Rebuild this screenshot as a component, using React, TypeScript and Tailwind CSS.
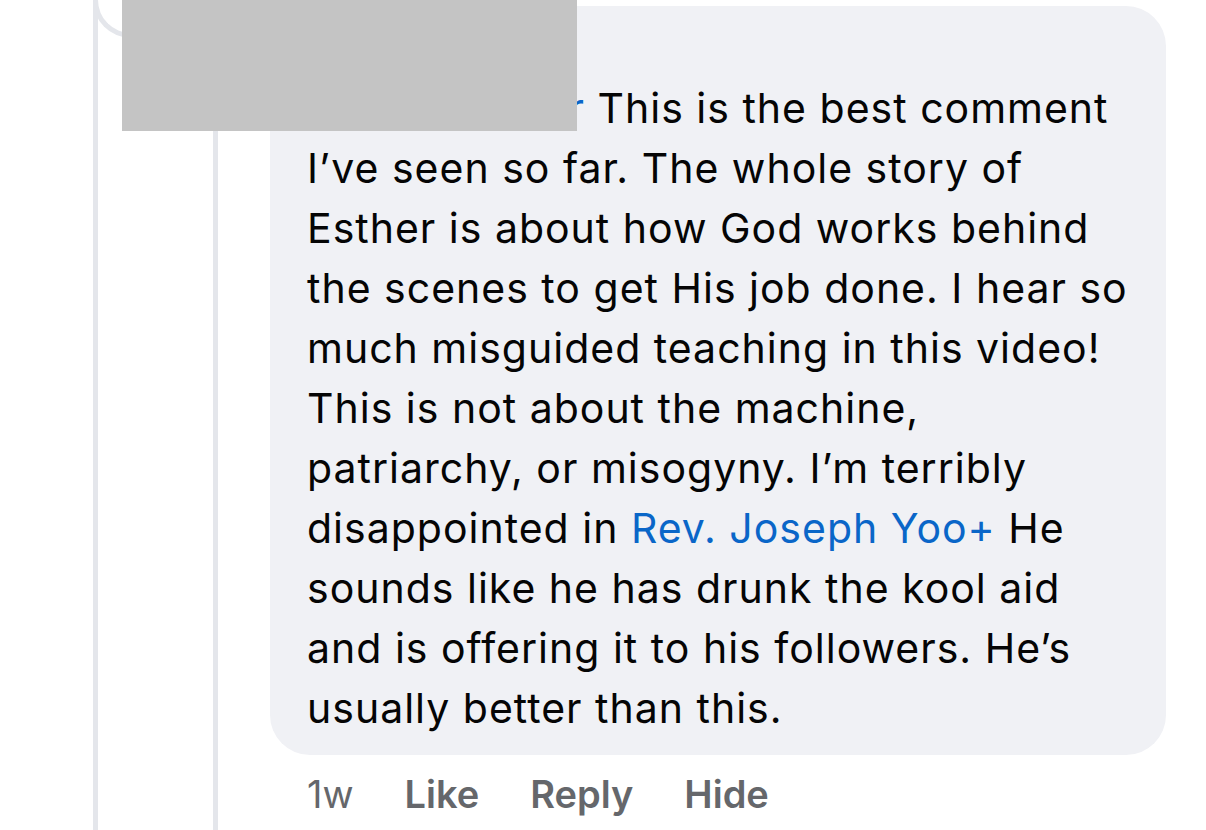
export default function App() {
  const lines: React.ReactNode[] = [
    <>
      <span className="inline-block w-[278px] text-right text-[#0a66c8]">Commenter</span> This is the best comment
    </>,
    <>I’ve seen so far. The whole story of</>,
    <>Esther is about how God works behind</>,
    <>the scenes to get His job done. I hear so</>,
    <>much misguided teaching in this video!</>,
    <>This is not about the machine,</>,
    <>patriarchy, or misogyny. I’m terribly</>,
    <>
      disappointed in <span className="text-[#0a66c8]">Rev. Joseph Yoo+</span> He
    </>,
    <>sounds like he has drunk the kool aid</>,
    <>and is offering it to his followers. He’s</>,
    <>usually better than this.</>,
  ]

  return (
    <div className="relative w-[1206px] h-[830px] overflow-hidden bg-white font-['Inter','Liberation_Sans',sans-serif]">
      {/* thread connector curving in from above */}
      <div className="absolute left-[93px] top-[-40px] w-[70px] h-[78px] rounded-bl-[38px] border-l-[5px] border-b-[5px] border-[#e4e6eb]" />

      <div className="flex h-full pl-[93px]">
        <div className="h-full border-l-[5px] border-[#e4e6eb]" />
        <div className="ml-[115px] h-full border-l-[5px] border-[#e4e6eb]" />

        <div className="ml-[52px] mt-[6px] flex flex-col">
          {/* Comment bubble */}
          <div className="w-[896px] rounded-[40px] bg-[#f0f1f5] pl-[37px] pr-[30px] pt-[18px] pb-[17px] text-[41px] leading-[60px] tracking-[1px] text-[#050505] whitespace-nowrap">
            <div className="font-semibold leading-[54px]">Author</div>
            {lines.map((l, i) => (
              <div key={i}>{l}</div>
            ))}
          </div>

          {/* Actions */}
          <div className="mt-[17px] flex items-center gap-[51px] pl-[37px] text-[38px] leading-[44px] text-[#65676b]">
            <span>1w</span>
            <span className="font-semibold">Like</span>
            <span className="font-semibold">Reply</span>
            <span className="font-semibold">Hide</span>
          </div>
        </div>
      </div>

      {/* redaction */}
      <div className="absolute left-[122px] top-0 w-[455px] h-[131px] bg-[#c4c4c4]" />
    </div>
  )
}
